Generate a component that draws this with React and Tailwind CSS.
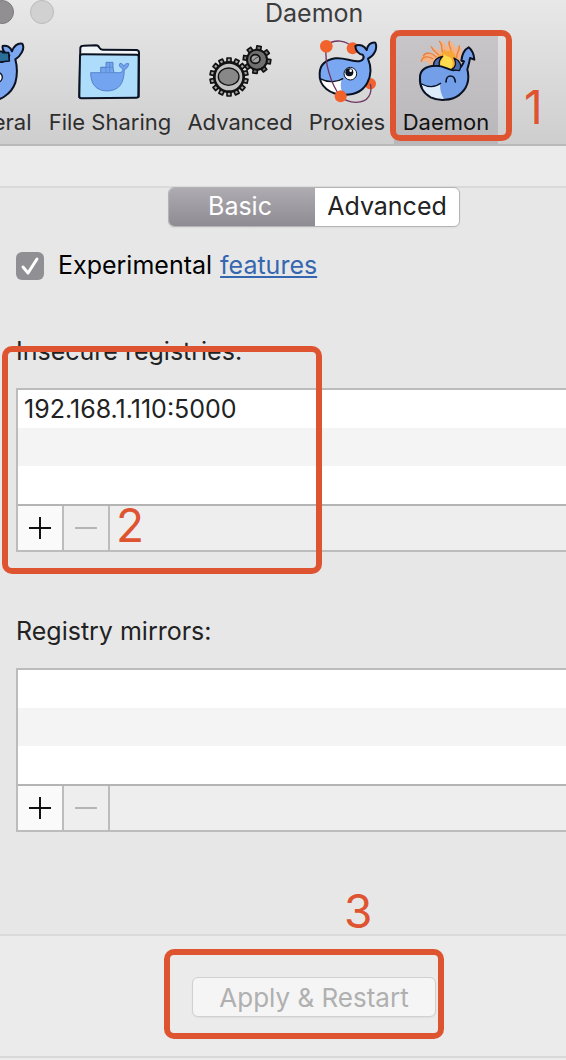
const outline = { stroke: '#0b1222', strokeLinecap: 'round', strokeLinejoin: 'round' };

function GeneralIcon() {
  return (
    <svg viewBox="-123 120 192 192" className="size-16 overflow-visible" aria-hidden="true">
      <g {...outline} strokeWidth="6">
        <path d="M-88 232 C-86 196 -40 180 6 186 L22 178 C26 174 28 170 28 166 C14 160 6 150 8 138 C20 134 32 142 36 154 C40 140 52 128 67 131 C76 146 62 168 46 178 C52 200 52 226 46 248 C34 284 -2 304 -36 304 C-68 302 -90 270 -88 232 Z" fill="#7ba6f0" />
        <path d="M-62 170 L-62 158 L6 154 L8 158 L26 158 L28 183 L-58 192 Z" fill="#2b6e97" strokeWidth="5" />
        <path d="M-82 254 C-50 266 -30 264 -14 272" fill="none" strokeWidth="4" />
        <circle cx="-8" cy="232" r="15" fill="#fff" strokeWidth="4" />
      </g>
      <circle cx="-13" cy="231" r="8" fill="#0b1222" />
    </svg>
  );
}

function FolderIcon() {
  return (
    <svg viewBox="234 120 192 192" className="size-16" aria-hidden="true">
      <g {...outline} strokeWidth="6">
        <path d="M238 292 L241 144 Q242 137 250 137 L288 136 Q295 136 298 143 Q301 149 308 149 L410 150 Q417 151 417 158 L416 290 Z" fill="#f3f6f8" />
        <path d="M240 168 Q241 163 248 163 L410 164 Q416 164 416 170 L415 288 Q415 293 409 293 L244 295 Q238 295 238 289 Z" fill="#aedcfb" />
      </g>
      <path d="M272 218 L302 218 L302 202 L318 202 L318 187 L339 187 L339 202 L342 218 L359 218 C368 216 370 210 366 204 C358 202 356 194 360 190 C366 190 370 194 371 199 C374 192 380 189 386 191 C386 200 380 206 373 209 C372 250 358 272 321 273 C286 272 272 250 272 218 Z" fill="#72a4ef" stroke="#4d78bf" strokeWidth="2.5" strokeLinejoin="round" />
      <path d="M302 218 H342 M303 202 H340 M318 202 V218 M329 187 V218" fill="none" stroke="#4d78bf" strokeWidth="1.5" />
    </svg>
  );
}

const bigTeeth = [0, 26, 51, 77, 103, 129, 154, 180, 206, 231, 257, 283, 309, 334];
const smallTeeth = [8, 53, 98, 143, 188, 233, 278, 323];

function GearsIcon() {
  return (
    <svg viewBox="84 120 192 192" className="size-16" aria-hidden="true">
      <g stroke="#111" strokeWidth="5" strokeLinejoin="round">
        {smallTeeth.map((a) => (
          <rect key={a} x="225" y="138" width="13" height="18" fill="#777" transform={`rotate(${a} 231 179)`} />
        ))}
        <circle cx="231" cy="179" r="30" fill="#6f6f6f" strokeWidth="6" />
        <ellipse cx="226" cy="177" rx="14" ry="13" fill="#a2a2a2" />
        <path d="M217 184 Q224 174 236 170" fill="none" strokeWidth="2" />
        {bigTeeth.map((a) => (
          <rect key={a} x="141" y="174" width="12" height="18" fill="#a5a5a5" strokeWidth="5" transform={`rotate(${a} 147 231)`} />
        ))}
        <circle cx="147" cy="231" r="44" fill="#c2c2c2" strokeWidth="8" />
        <ellipse cx="146" cy="230" rx="31" ry="26" fill="#888" strokeWidth="4" />
      </g>
    </svg>
  );
}

function ProxiesIcon() {
  return (
    <svg viewBox="405 120 192 192" className="size-16" aria-hidden="true">
      <path d="M440 134 C462 118 500 118 518 144" fill="none" stroke="#6d3560" strokeWidth="4" />
      <circle cx="518" cy="145" r="18" fill="#f1622d" />
      <circle cx="571" cy="251" r="17" fill="#f1622d" />
      <path d="M419 220 C420 194 434 180 466 175 C492 172 512 184 538 184 C550 182 554 172 548 164 C538 164 526 152 526 138 C538 130 554 138 560 150 C562 136 572 126 586 128 C594 146 582 168 564 176 C574 200 574 226 562 248 C550 270 526 284 496 284 C450 286 416 258 419 220 Z" fill="#7aa7f1" />
      <path d="M420 236 C446 250 474 244 486 234 C480 252 482 270 490 284 C458 288 424 268 420 236 Z" fill="#fff" />
      <path d="M419 220 C420 194 434 180 466 175 C492 172 512 184 538 184 C550 182 554 172 548 164 C538 164 526 152 526 138 C538 130 554 138 560 150 C562 136 572 126 586 128 C594 146 582 168 564 176 C574 200 574 226 562 248 C550 270 526 284 496 284 C450 286 416 258 419 220 Z" fill="none" {...outline} strokeWidth="6" />
      <path d="M420 236 C446 250 474 246 488 236" fill="none" {...outline} strokeWidth="4" />
      <circle cx="511" cy="221" r="19" fill="#fff" stroke="#0b1222" strokeWidth="3" />
      <circle cx="508" cy="217" r="12" fill="#0b1222" />
      <circle cx="512" cy="212" r="4" fill="#fff" />
      <path d="M438 142 C434 190 452 250 480 288 C506 314 552 312 566 290 C574 278 574 264 571 252" fill="none" stroke="#6d3560" strokeWidth="4" />
      <circle cx="439" cy="139" r="19" fill="#f1622d" />
      <circle cx="482" cy="289" r="18" fill="#f1622d" />
    </svg>
  );
}

function DaemonIcon() {
  return (
    <svg viewBox="132 120 192 192" className="size-16" aria-hidden="true">
      <path d="M186 200 C180 188 168 182 156 184 C150 172 158 160 172 158 C184 158 194 162 200 166 C192 156 184 150 184 138 C194 146 206 150 212 156 C210 142 216 130 206 122 C220 124 230 132 232 142 C236 134 234 126 238 122 C250 128 256 138 256 148 C260 144 262 138 268 136 C280 146 276 168 270 182 L262 206 Z" fill="#f4b48a" />
      <path d="M154 184 C156 170 172 166 188 176 M160 168 C168 154 186 158 198 170 M184 140 C188 154 202 156 208 168 M208 124 C220 134 212 146 218 156 M238 124 C232 138 248 146 244 160 M268 138 C270 152 258 158 260 174" fill="none" stroke="#e8833f" strokeWidth="4" strokeLinecap="round" />
      <path d="M202 200 C208 186 200 174 206 164 C214 168 216 160 222 146 C230 158 238 154 244 148 C250 160 262 168 260 184 L252 208 Z" fill="#f8a836" />
      <path d="M212 200 C208 184 220 178 222 162 C230 172 240 166 246 180 C250 190 248 200 244 206 Z" fill="#ffdc4d" />
      <path d="M150 232 C150 210 166 198 198 197 C222 196 232 210 250 211 C268 211 276 200 282 184 L274 182 C276 164 284 148 296 142 C306 150 312 164 313 179 L300 174 C298 190 294 200 292 208 C300 240 290 268 266 286 C244 302 206 304 182 292 C158 278 148 258 150 232 Z" fill="#739fe9" />
      <path d="M155 252 C172 264 196 264 210 252 C210 270 214 284 222 298 C190 304 162 286 155 252 Z" fill="#dcecfb" />
      <g fill="none" {...outline} strokeWidth="6">
        <path d="M150 232 C150 210 166 198 198 197 C222 196 232 210 250 211 C268 211 276 200 282 184 L274 182 C276 164 284 148 296 142 C306 150 312 164 313 179 L300 174 C298 190 294 200 292 208 C300 240 290 268 266 286 C244 302 206 304 182 292 C158 278 148 258 150 232 Z" />
        <path d="M155 252 C174 262 196 262 212 250" strokeWidth="4" />
        <path d="M228 246 C228 222 254 222 256 246" strokeWidth="5" />
      </g>
      <g fill="#4b6fae" {...outline} strokeWidth="4">
        <path d="M190 197 C190 182 202 172 218 169 C210 176 206 186 208 197 Z" />
        <path d="M244 209 C258 202 260 190 252 174 C268 180 278 196 268 212 Z" />
      </g>
    </svg>
  );
}

const tabs = [
  { name: 'General', Icon: GeneralIcon, width: 'w-[98px]' },
  { name: 'File Sharing', Icon: FolderIcon, width: 'w-[140px]' },
  { name: 'Advanced', Icon: GearsIcon, width: 'w-[120px]' },
  { name: 'Proxies', Icon: ProxiesIcon, width: 'w-[94px]' },
  { name: 'Daemon', Icon: DaemonIcon, width: 'w-[104px]', active: true },
];

function Callout({ className }) {
  return <div className={`pointer-events-none absolute rounded-[10px] border-6 border-[#df5430] ${className}`} />;
}

function CalloutNumber({ className, children }) {
  return <span className={`pointer-events-none absolute text-[46px] leading-none text-[#df5430] ${className}`}>{children}</span>;
}

function RegistryList({ title, items, children }) {
  const rows = [0, 1, 2].map((i) => items[i] || '');
  return (
    <section className="relative h-[280px] pl-4">
      <h2 className="h-[52px] text-[25px] leading-[30px]">{title}</h2>
      <div className="border-y-2 border-l-2 border-[#bcbcbc]">
        <ul aria-label={title}>
          {rows.map((row, i) => (
            <li key={i} className="h-[38px] bg-white px-1.5 text-[25px] leading-[38px] even:bg-[#f4f4f4]">{row}</li>
          ))}
        </ul>
        <div className="flex h-[46px] border-t-2 border-[#b4b4b4] bg-[#eee]">
          <button type="button" aria-label="Add" className="flex w-[46px] items-center justify-center border-r-2 border-[#bcbcbc] bg-[#fafafa]">
            <svg viewBox="0 0 24 24" className="size-6"><path d="M1 12H23M12 1V23" stroke="#111" strokeWidth="2" /></svg>
          </button>
          <button type="button" aria-label="Remove" disabled className="flex w-[46px] items-center justify-center border-r-2 border-[#bcbcbc]">
            <svg viewBox="0 0 24 24" className="size-6"><path d="M1 12H23" stroke="#b5b5b5" strokeWidth="2" /></svg>
          </button>
        </div>
      </div>
      {children}
    </section>
  );
}

export default function App() {
  return (
    <div className="min-h-screen overflow-hidden bg-[#ebebeb] font-['Inter','Liberation_Sans',sans-serif] text-[#222]">
      <header className="h-[146px] border-b-2 border-[#b9b9b9] bg-linear-to-b from-[#e9e8e9] to-[#cfcecf]">
        <div className="flex h-[30px]">
          <div className="-ml-2.5 flex w-[275px] gap-4">
            <button type="button" aria-label="Minimize" className="size-6 rounded-full border border-[#7d7b7e] bg-[#918f92]" />
            <button type="button" aria-label="Zoom" className="size-6 rounded-full border border-[#bbb9bb] bg-[#d2d1d2]" />
          </div>
          <h1 className="text-[25px] leading-[26px] text-[#3c3c3c]">Daemon</h1>
        </div>
        <nav className="-ml-[58px] flex h-[114px]">
          {tabs.map(({ name, Icon, width, active }) => (
            <div key={name} className={`relative shrink-0 ${width}`}>
              <button type="button" className={`flex size-full flex-col items-center pt-2.5 ${active ? 'bg-linear-to-b from-[#c8c6c8] to-[#b9b7b9] text-[#111]' : 'text-[#2e2e2e]'}`}>
                <Icon />
                <span className="mt-1 text-[22px] leading-7 whitespace-nowrap">{name}</span>
              </button>
              {active && (
                <>
                  <Callout className="top-0 -left-1 h-[111px] w-[122px]" />
                  <CalloutNumber className="top-[54px] left-[130px]">1</CalloutNumber>
                </>
              )}
            </div>
          ))}
        </nav>
      </header>

      <main className="mt-10 h-[750px] border-y-2 border-[#dadada] bg-[#e7e7e7]">
        <div className="-mt-px ml-[168px] flex h-10 w-[292px] overflow-hidden rounded-md border border-[#b4b4b4] bg-white text-[25px] shadow-xs">
          <button type="button" className="w-[146px] bg-linear-to-b from-[#aeacb1] to-[#8e8c92] pr-1 text-white">Basic</button>
          <button type="button" className="flex-1">Advanced</button>
        </div>

        <div className="mt-6 mb-[55px] flex h-[30px] items-center pl-4 text-[25px] text-black">
          <span className="relative mr-3.5 size-7">
            <input id="experimental" type="checkbox" defaultChecked className="block size-7 appearance-none rounded-md bg-[#908f94]" />
            <svg viewBox="0 0 28 28" className="pointer-events-none absolute inset-0"><path d="M7 15L12 21L21 7" fill="none" stroke="#fff" strokeWidth="3" strokeLinecap="round" strokeLinejoin="round" /></svg>
          </span>
          <label htmlFor="experimental">Experimental</label>
          <a href="#features" className="ml-2 text-[#3567b0] underline decoration-2 underline-offset-2">features</a>
        </div>

        <RegistryList title="Insecure registries:" items={['192.168.1.110:5000']}>
          <Callout className="top-[10px] left-0.5 h-[228px] w-[320px]" />
          <CalloutNumber className="top-[166px] left-[116px]">2</CalloutNumber>
        </RegistryList>
        <RegistryList title="Registry mirrors:" items={[]} />
      </main>

      <footer className="relative flex h-[122px] border-b-2 border-[#d8d8d8] pt-[41px] pl-48">
        <button type="button" disabled className="h-10 w-[244px] rounded-md border border-[#d0d0d0] bg-[#f5f5f5] text-[26px] text-[#b0b0b0] shadow-xs">Apply &amp; Restart</button>
        <Callout className="top-[13px] left-[164px] h-[90px] w-[280px]" />
        <CalloutNumber className="-top-[48px] left-[344px]">3</CalloutNumber>
      </footer>
    </div>
  );
}
